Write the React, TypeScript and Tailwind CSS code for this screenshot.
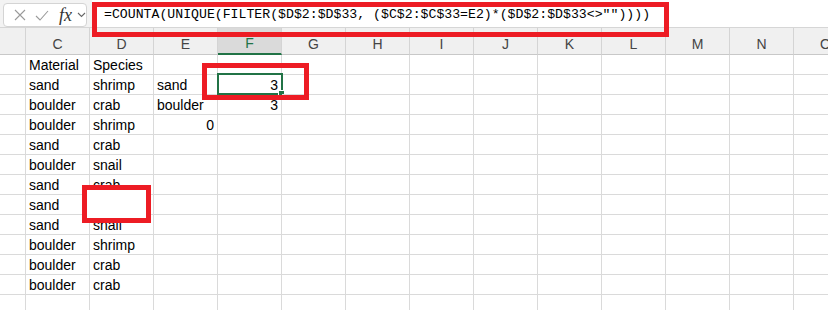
import React from 'react';

const COLS = ['', 'C', 'D', 'E', 'F', 'G', 'H', 'I', 'J', 'K', 'L', 'M', 'N', 'O'];

type Cell = { v: string; right?: boolean };

// rows of C, D, E, F
const ROWS: Cell[][] = [
  [{ v: 'Material' }, { v: 'Species' }, { v: '' }, { v: '' }],
  [{ v: 'sand' }, { v: 'shrimp' }, { v: 'sand' }, { v: '3', right: true }],
  [{ v: 'boulder' }, { v: 'crab' }, { v: 'boulder' }, { v: '3', right: true }],
  [{ v: 'boulder' }, { v: 'shrimp' }, { v: '0', right: true }, { v: '' }],
  [{ v: 'sand' }, { v: 'crab' }],
  [{ v: 'boulder' }, { v: 'snail' }],
  [{ v: 'sand' }, { v: 'crab' }],
  [{ v: 'sand' }, { v: '' }],
  [{ v: 'sand' }, { v: 'snail' }],
  [{ v: 'boulder' }, { v: 'shrimp' }],
  [{ v: 'boulder' }, { v: 'crab' }],
  [{ v: 'boulder' }, { v: 'crab' }],
  [],
];

const FORMULA = '=COUNTA(UNIQUE(FILTER($D$2:$D$33, ($C$2:$C$33=E2)*($D$2:$D$33<>""))))';

const FormulaBar = () => (
  <div className="flex h-[28px] bg-[#f3f3f3] border-b border-[#d6d6d6]">
    <div className="ml-[3px] mt-[3px] h-[24px] w-[84px] rounded-[4px] border border-[#d4d4d4] bg-white flex items-center">
      {/* cancel */}
      <svg width="12" height="12" viewBox="0 0 12 12" className="ml-[10px]">
        <path d="M1 1 L11 11 M11 1 L1 11" stroke="#9a9a9a" strokeWidth="1.1" fill="none" />
      </svg>
      {/* enter */}
      <svg width="14" height="11" viewBox="0 0 14 11" className="ml-[9px]">
        <path d="M1 6 L5 10 L13 1" stroke="#9a9a9a" strokeWidth="1.1" fill="none" />
      </svg>
      <span className="ml-[10px] text-[18px] leading-none italic text-[#333] font-['Liberation_Serif',serif]">
        fx
      </span>
      <svg width="9" height="6" viewBox="0 0 9 6" className="ml-[5px]">
        <path d="M1 1 L4.5 4.5 L8 1" stroke="#666" strokeWidth="1.1" fill="none" />
      </svg>
    </div>
    <div className="ml-[5px] flex-1 bg-white flex items-center pl-[12px]">
      <span className="font-['Liberation_Mono',monospace] text-[13.2px] text-black whitespace-pre pt-[2px]">
        {FORMULA}
      </span>
    </div>
  </div>
);

const HeaderRow = () => (
  <div className="grid grid-cols-[26px_repeat(13,64px)] h-[27px] bg-[#f0f0f0]">
    {COLS.map((c, i) => (
      <div
        key={i}
        className={`flex items-end justify-center pb-[3px] border-r border-[#d4d4d4] text-[14px] leading-[14px] ${
          c === 'F'
            ? 'bg-[#dadada] border-b-2 border-b-[#217346] text-[#217346] pb-[2px]'
            : 'border-b border-b-[#c8c8c8] text-[#444]'
        }`}
      >
        {c}
      </div>
    ))}
  </div>
);

const DataRow = ({ cells, rowIdx }: { cells: Cell[]; rowIdx: number }) => (
  <div className="grid grid-cols-[26px_repeat(13,64px)] h-[20px]">
    {COLS.map((c, i) => {
      const cell = i >= 1 && i <= 4 ? cells[i - 1] : undefined;
      const selected = c === 'F' && rowIdx === 1;
      return (
        <div
          key={i}
          className={`relative flex items-end border-r border-b border-[#dadada] px-[3px] pb-[2px] text-[14px] leading-[14px] text-black whitespace-nowrap ${
            cell?.right ? 'justify-end' : 'justify-start'
          }`}
        >
          {cell?.v}
          {selected && (
            <div className="absolute -left-[1px] -top-[2px] w-[66px] h-[22px] border-2 border-[#217346]">
              <div className="absolute -right-[4px] -bottom-[4px] w-[7px] h-[7px] bg-[#217346] border border-white" />
            </div>
          )}
        </div>
      );
    })}
  </div>
);

export default function App() {
  return (
    <div className="relative w-[828px] h-[310px] overflow-hidden bg-white font-['Liberation_Sans',Arial,sans-serif]">
      <FormulaBar />
      <HeaderRow />
      {ROWS.map((r, i) => (
        <DataRow key={i} cells={r} rowIdx={i} />
      ))}

      {/* annotation boxes */}
      <div className="absolute left-[92px] top-[2px] w-[577px] h-[35px] border-[5px] border-[#ed1c24]" />
      <div className="absolute left-[202px] top-[63px] w-[107px] h-[37px] border-[5px] border-[#ed1c24]" />
      <div className="absolute left-[82px] top-[185px] w-[69px] h-[38px] border-[5px] border-[#ed1c24] bg-white" />
    </div>
  );
}
